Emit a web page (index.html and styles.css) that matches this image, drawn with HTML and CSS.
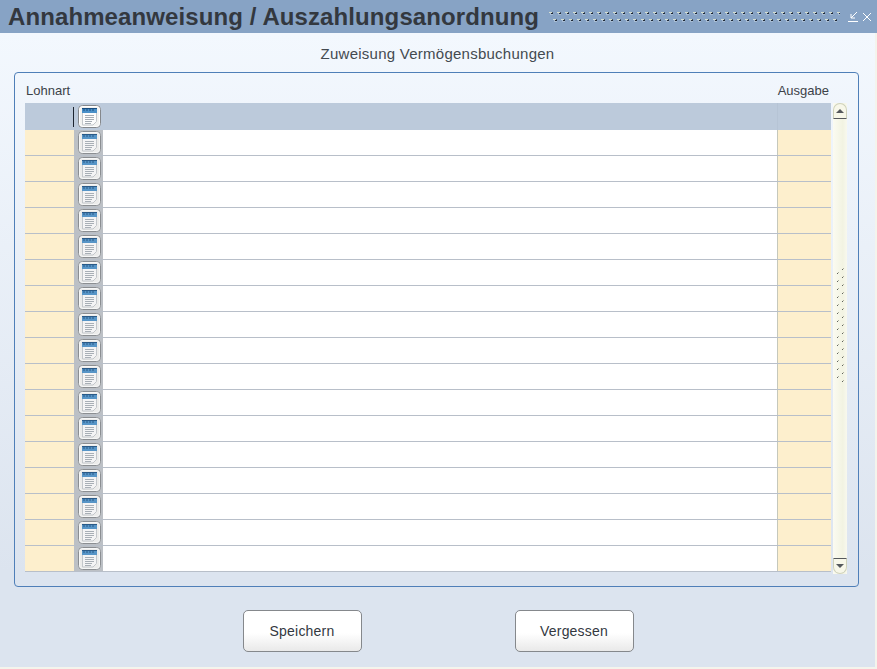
FILE: index.html
```html
<!DOCTYPE html>
<html lang="de">
<head>
  <meta charset="UTF-8">
  <meta name="viewport" content="width=device-width, initial-scale=1.0">
  <title>Annahmeanweisung / Auszahlungsanordnung</title>
  <link rel="stylesheet" href="styles.css">
</head>
<body>
  <svg class="defs" width="0" height="0">
    <defs>
      <pattern id="grip-dots" width="8" height="14" patternUnits="userSpaceOnUse">
        <rect x="0" y="1" width="3" height="1" fill="#d5dfd0"/>
        <rect x="1" y="2" width="3" height="2" fill="#a9bdd4"/>
        <rect x="2" y="2" width="2" height="1" fill="#1f2a38"/>
        <rect x="3" y="1" width="1" height="1" fill="#4a5a70"/>
        <rect x="4" y="8" width="3" height="1" fill="#d5dfd0"/>
        <rect x="5" y="9" width="3" height="2" fill="#a9bdd4"/>
        <rect x="6" y="9" width="2" height="1" fill="#1f2a38"/>
        <rect x="7" y="8" width="1" height="1" fill="#4a5a70"/>
      </pattern>
      <pattern id="thumb-dots" width="10" height="8" patternUnits="userSpaceOnUse">
        <rect x="6" y="0" width="1" height="1" fill="#b0b2a0"/>
        <rect x="5" y="1" width="1" height="1" fill="#5f625c"/>
        <rect x="1" y="4" width="1" height="1" fill="#b0b2a0"/>
        <rect x="0" y="5" width="1" height="1" fill="#5f625c"/>
      </pattern>
    </defs>
    <symbol id="note" viewBox="0 0 23 23">
      <rect x="0.5" y="0.5" width="22" height="22" rx="4" fill="#f3f3f1" stroke="#85888c"/>
      <rect x="1.5" y="1.5" width="20" height="20" rx="3" fill="none" stroke="#fff"/>
      <path d="M4.500 4.500h14v12l-3.500 3.500h-10.500z" fill="#fcfcfc" stroke="#c4c8cc"/>
      <rect x="4" y="3" width="15" height="5" fill="#4a90c8"/>
      <path d="M4 3.500h15" stroke="#174d80"/>
      <path d="M6 4v2M9 4v2M12 4v2M15 4v2" stroke="#174d80"/>
      <path d="M7 10.500h9M7 12.500h9M7 14.500h9M7 16.500h7M7 18.500h6" stroke="#a6adb4"/>
    </symbol>
  </svg>

  <header class="titlebar">
    <h1>Annahmeanweisung / Auszahlungsanordnung</h1>
    <svg class="grip"><rect width="100%" height="100%" fill="url(#grip-dots)"/></svg>
    <svg class="win-icon" width="12" height="12" viewBox="0 0 12 12">
      <path d="M10 1 4 7M4 3v4h4M1 10.500h10" fill="none" stroke="#fff"/>
    </svg>
    <svg class="win-icon" width="10" height="10" viewBox="0 0 10 10">
      <path d="M1 1l8 8M9 1l-8 8" fill="none" stroke="#fff"/>
    </svg>
  </header>

  <main class="content">
    <h2>Zuweisung Vermögensbuchungen</h2>

    <section class="panel">
      <div class="labels">
        <span>Lohnart</span>
        <span>Ausgabe</span>
      </div>

      <div class="table-wrap">
        <div class="table">
          <div class="row row-head">
            <div class="cell cell-key"></div>
            <div class="cell cell-btn"><svg class="note"><use href="#note"/></svg></div>
            <div class="cell cell-text"></div>
            <div class="cell cell-out"></div>
          </div>
          <div class="row"><div class="cell cell-key"></div><div class="cell cell-btn"><svg class="note faded"><use href="#note"/></svg></div><div class="cell cell-text"></div><div class="cell cell-out"></div></div>
          <div class="row"><div class="cell cell-key"></div><div class="cell cell-btn"><svg class="note faded"><use href="#note"/></svg></div><div class="cell cell-text"></div><div class="cell cell-out"></div></div>
          <div class="row"><div class="cell cell-key"></div><div class="cell cell-btn"><svg class="note faded"><use href="#note"/></svg></div><div class="cell cell-text"></div><div class="cell cell-out"></div></div>
          <div class="row"><div class="cell cell-key"></div><div class="cell cell-btn"><svg class="note faded"><use href="#note"/></svg></div><div class="cell cell-text"></div><div class="cell cell-out"></div></div>
          <div class="row"><div class="cell cell-key"></div><div class="cell cell-btn"><svg class="note faded"><use href="#note"/></svg></div><div class="cell cell-text"></div><div class="cell cell-out"></div></div>
          <div class="row"><div class="cell cell-key"></div><div class="cell cell-btn"><svg class="note faded"><use href="#note"/></svg></div><div class="cell cell-text"></div><div class="cell cell-out"></div></div>
          <div class="row"><div class="cell cell-key"></div><div class="cell cell-btn"><svg class="note faded"><use href="#note"/></svg></div><div class="cell cell-text"></div><div class="cell cell-out"></div></div>
          <div class="row"><div class="cell cell-key"></div><div class="cell cell-btn"><svg class="note faded"><use href="#note"/></svg></div><div class="cell cell-text"></div><div class="cell cell-out"></div></div>
          <div class="row"><div class="cell cell-key"></div><div class="cell cell-btn"><svg class="note faded"><use href="#note"/></svg></div><div class="cell cell-text"></div><div class="cell cell-out"></div></div>
          <div class="row"><div class="cell cell-key"></div><div class="cell cell-btn"><svg class="note faded"><use href="#note"/></svg></div><div class="cell cell-text"></div><div class="cell cell-out"></div></div>
          <div class="row"><div class="cell cell-key"></div><div class="cell cell-btn"><svg class="note faded"><use href="#note"/></svg></div><div class="cell cell-text"></div><div class="cell cell-out"></div></div>
          <div class="row"><div class="cell cell-key"></div><div class="cell cell-btn"><svg class="note faded"><use href="#note"/></svg></div><div class="cell cell-text"></div><div class="cell cell-out"></div></div>
          <div class="row"><div class="cell cell-key"></div><div class="cell cell-btn"><svg class="note faded"><use href="#note"/></svg></div><div class="cell cell-text"></div><div class="cell cell-out"></div></div>
          <div class="row"><div class="cell cell-key"></div><div class="cell cell-btn"><svg class="note faded"><use href="#note"/></svg></div><div class="cell cell-text"></div><div class="cell cell-out"></div></div>
          <div class="row"><div class="cell cell-key"></div><div class="cell cell-btn"><svg class="note faded"><use href="#note"/></svg></div><div class="cell cell-text"></div><div class="cell cell-out"></div></div>
          <div class="row"><div class="cell cell-key"></div><div class="cell cell-btn"><svg class="note faded"><use href="#note"/></svg></div><div class="cell cell-text"></div><div class="cell cell-out"></div></div>
          <div class="row"><div class="cell cell-key"></div><div class="cell cell-btn"><svg class="note faded"><use href="#note"/></svg></div><div class="cell cell-text"></div><div class="cell cell-out"></div></div>
        </div>

        <div class="scrollbar">
          <div class="scroll-btn scroll-up"><span class="arrow-up"></span></div>
          <div class="scroll-track">
            <svg class="scroll-thumb"><rect width="100%" height="100%" fill="url(#thumb-dots)"/></svg>
          </div>
          <div class="scroll-btn scroll-down"><span class="arrow-down"></span></div>
        </div>
      </div>
    </section>

    <div class="actions">
      <button class="button">Speichern</button>
      <button class="button">Vergessen</button>
    </div>
  </main>
</body>
</html>
```

FILE: styles.css
```css
* {
  margin: 0;
  padding: 0;
  box-sizing: border-box;
}

html, body {
  height: 100%;
}

body {
  font-family: "Liberation Sans", Arial, sans-serif;
  color: #33383f;
  display: flex;
  flex-direction: column;
  overflow: hidden;
  background-color: #f4f4ec;
}

.defs {
  position: absolute;
}

.titlebar {
  height: 33px;
  flex: none;
  display: flex;
  align-items: center;
  padding: 0 5px 0 8px;
  background-color: #87a3c5;
}

.titlebar h1 {
  font-size: 24px;
  font-weight: bold;
  letter-spacing: 0.1px;
  white-space: nowrap;
  color: #33383f;
}

.grip {
  flex: 1;
  min-width: 0;
  height: 12px;
  margin: 0 4px 0 10px;
}

.win-icon {
  flex: none;
  margin-left: 3px;
}

.content {
  flex: 1;
  margin-right: 2px;
  margin-bottom: 2px;
  display: flex;
  flex-direction: column;
  background: linear-gradient(#f3f8fe, #dce4ef 85%);
}

.content h2 {
  font-size: 15px;
  font-weight: normal;
  letter-spacing: 0.25px;
  text-align: center;
  color: #444a50;
  margin-top: 12px;
  height: 27px;
}

.panel {
  margin: 0 16px 0 14px;
  height: 515px;
  border: 1px solid #4f7fb8;
  border-radius: 4px;
  padding: 0 10px;
}

.labels {
  display: flex;
  justify-content: space-between;
  height: 30px;
  padding: 10px 19px 0 1px;
  font-size: 13px;
  color: #3c4248;
}

.table-wrap {
  display: flex;
  gap: 2px;
}

.table {
  width: 806px;
  flex: none;
}

.row {
  display: grid;
  grid-template-columns: 49px 29px 1fr 54px;
  height: 26px;
  border-bottom: 1px solid #b8bfc9;
}

.row-head {
  height: 27px;
  border-bottom: 0;
  background-color: #bccadb;
}

.cell-key {
  background-color: #fdefcd;
}

.cell-btn {
  background-color: #bcc0c5;
  display: flex;
  padding: 1px 0 0 4px;
}

.cell-text {
  background-color: #fff;
}

.cell-out {
  background-color: #fdefcd;
  border-left: 1px solid #c5c8bc;
}

.row-head .cell-key {
  background-color: transparent;
  position: relative;
}

/* cursor at the end of the active field */
.row-head .cell-key::after {
  content: "";
  position: absolute;
  right: 0;
  top: 4px;
  height: 20px;
  width: 1px;
  background-color: #1d2530;
}

.row-head .cell-btn {
  background-color: transparent;
  padding-top: 2px;
}

.row-head .cell-text {
  background-color: transparent;
}

.row-head .cell-out {
  background-color: transparent;
  border-left-color: #b6c4d5;
}

.note {
  display: block;
  width: 23px;
  height: 23px;
}

.note.faded {
  opacity: 0.88;
}

.scrollbar {
  width: 14px;
  height: 471px;
  display: flex;
  flex-direction: column;
  background: linear-gradient(to right, #fbfbf1, #f2f3e2 70%, #f8f8ee);
}

.scroll-btn {
  height: 16px;
  flex: none;
  display: flex;
  align-items: center;
  justify-content: center;
  background-color: #f7f7e9;
  border: 1px solid #cfd2ba;
}

.scroll-up {
  border-radius: 7px 7px 0 0;
  border-bottom: 1px solid #55585c;
}

.scroll-down {
  border-radius: 0 0 7px 7px;
  border-top: 1px solid #55585c;
}

.arrow-up {
  border: 4px solid transparent;
  border-top: 0;
  border-bottom: 4px solid #55585c;
}

.arrow-down {
  border: 4px solid transparent;
  border-bottom: 0;
  border-top: 4px solid #55585c;
}

.scroll-track {
  flex: 1;
  padding: 149px 3px 0 4px;
}

.scroll-thumb {
  display: block;
  width: 7px;
  height: 116px;
}

.actions {
  display: flex;
  justify-content: center;
  gap: 153px;
  padding-top: 23px;
  margin-left: 1px;
}

.button {
  width: 119px;
  height: 42px;
  font-family: inherit;
  font-size: 14px;
  letter-spacing: 0.2px;
  color: #33383f;
  border: 1px solid #85888c;
  border-radius: 5px;
  background: linear-gradient(#fff 55%, #e9e9e9);
  cursor: pointer;
}
```
